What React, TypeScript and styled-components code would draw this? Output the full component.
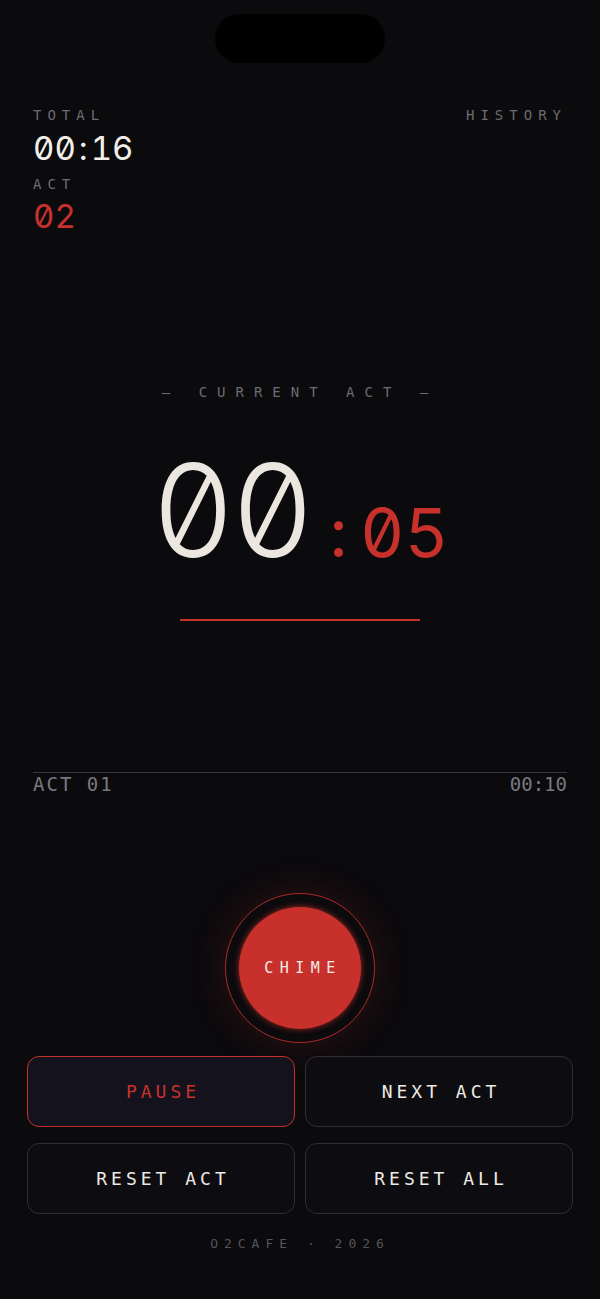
import styled, { createGlobalStyle } from 'styled-components';

const mono = '"DejaVu Sans Mono", "Liberation Mono", monospace';
const digits = 'Inter, "DejaVu Sans Mono", sans-serif';
const red = '#c8312b';

const GlobalStyle = createGlobalStyle`
	* {
		box-sizing: border-box;
	}
	html, body {
		margin: 0;
		padding: 0;
		background: #0b0a0d;
	}
	body {
		font-family: ${mono};
	}
`;

const Screen = styled.div`
	width: 600px;
	min-height: 1299px;
	background: #0b0a0d;
	display: flex;
	flex-direction: column;
	align-items: stretch;
	overflow: hidden;
`;

const Island = styled.div`
	align-self: center;
	width: 170px;
	height: 49px;
	margin-top: 14px;
	border-radius: 25px;
	background: #000;
`;

const Header = styled.div`
	display: flex;
	justify-content: space-between;
	align-items: flex-start;
	margin-top: 44px;
	padding: 0 33px 0 33px;
`;

const StatBlock = styled.div`
	display: flex;
	flex-direction: column;
`;

const Label = styled.span<{ $gap?: number }>`
	display: block;
	font-size: 14px;
	line-height: 16px;
	letter-spacing: 6px;
	color: #6d6c72;
	margin-top: ${({ $gap }) => $gap ?? 0}px;
`;

const StatValue = styled.span<{ $accent?: boolean; $gap: number }>`
	display: block;
	font-family: ${digits};
	font-feature-settings: 'tnum' 1, 'zero' 1;
	font-size: 33px;
	line-height: 36px;
	margin-top: ${({ $gap }) => $gap}px;
	color: ${({ $accent }) => ($accent ? red : '#f2efe9')};
`;

// keeps the colon in a fixed cell, like the digits around it
const Colon = styled.span<{ $cell: string }>`
	display: inline-block;
	width: ${({ $cell }) => $cell};
	text-align: center;
`;

const CurrentLabel = styled.div`
	margin-top: 150px;
	text-align: center;
	font-size: 14px;
	line-height: 16px;
	letter-spacing: 10px;
	color: #6d6c72;
`;

const Timer = styled.div`
	display: flex;
	justify-content: center;
	align-items: baseline;
	margin-top: 46px;
	height: 128px;
	font-family: ${digits};
	font-feature-settings: 'tnum' 1, 'zero' 1;
`;

const Minutes = styled.span`
	font-size: 129px;
	line-height: 128px;
	font-weight: 300;
	letter-spacing: -4px;
	color: #ebe7de;
`;

const Seconds = styled.span`
	font-size: 68px;
	line-height: 128px;
	font-weight: 400;
	color: ${red};
	margin-left: 6px;
`;

const Underline = styled.div`
	align-self: center;
	width: 240px;
	height: 2px;
	margin-top: 45px;
	background: ${red};
`;

const PrevAct = styled.div`
	margin: 151px 33px 0;
	border-top: 1.5px solid #37363c;
	display: flex;
	justify-content: space-between;
	font-size: 19px;
	line-height: 22px;
	letter-spacing: 2px;
	color: #7a797f;
	span:last-child {
		letter-spacing: 0;
	}
`;

const ChimeWrap = styled.div`
	display: flex;
	justify-content: center;
	margin-top: 98px;
`;

const ChimeRing = styled.div`
	width: 150px;
	height: 150px;
	border-radius: 50%;
	border: 1.5px solid rgba(200, 49, 43, 0.85);
	display: flex;
	align-items: center;
	justify-content: center;
	box-shadow: 0 0 40px rgba(200, 49, 43, 0.18);
`;

const ChimeButton = styled.button`
	width: 122px;
	height: 122px;
	border-radius: 50%;
	border: none;
	background: ${red};
	box-shadow: 0 0 6px rgba(200, 49, 43, 0.8);
	color: #f4ebe6;
	font-family: ${mono};
	font-size: 15px;
	letter-spacing: 6.5px;
	padding: 0 0 0 6px;
`;

const Controls = styled.div`
	display: grid;
	grid-template-columns: 1fr 1fr;
	column-gap: 10px;
	row-gap: 16px;
	margin-top: 13px;
	padding: 0 27px 0 27px;
`;

const Control = styled.button<{ $active?: boolean }>`
	height: 71px;
	border-radius: 12px;
	border: 1.5px solid ${({ $active }) => ($active ? red : '#2f2e35')};
	background: ${({ $active }) => ($active ? '#14131d' : '#0d0c10')};
	color: ${({ $active }) => ($active ? red : '#eeeae4')};
	font-family: ${mono};
	font-size: 18px;
	letter-spacing: 4px;
	padding: 0 0 0 4px;
`;

const Footer = styled.div`
	margin-top: 22px;
	text-align: center;
	font-size: 13px;
	line-height: 16px;
	letter-spacing: 6px;
	color: #55545a;
`;

export default function App() {
	return (
		<Screen>
			<GlobalStyle />
			<Island />
			<Header>
				<StatBlock>
					<Label>TOTAL</Label>
					<StatValue $gap={7}>
						00<Colon $cell="0.45em">:</Colon>16
					</StatValue>
					<Label $gap={10}>ACT</Label>
					<StatValue $accent $gap={6}>02</StatValue>
				</StatBlock>
				<Label>HISTORY</Label>
			</Header>

			<CurrentLabel>— CURRENT ACT —</CurrentLabel>
			<Timer>
				<Minutes>00</Minutes>
				<Seconds>
					<Colon $cell="44px">:</Colon>05
				</Seconds>
			</Timer>
			<Underline />

			<PrevAct>
				<span>ACT 01</span>
				<span>00:10</span>
			</PrevAct>

			<ChimeWrap>
				<ChimeRing>
					<ChimeButton>CHIME</ChimeButton>
				</ChimeRing>
			</ChimeWrap>

			<Controls>
				<Control $active>PAUSE</Control>
				<Control>NEXT ACT</Control>
				<Control>RESET ACT</Control>
				<Control>RESET ALL</Control>
			</Controls>

			<Footer>O2CAFE · 2026</Footer>
		</Screen>
	);
}
